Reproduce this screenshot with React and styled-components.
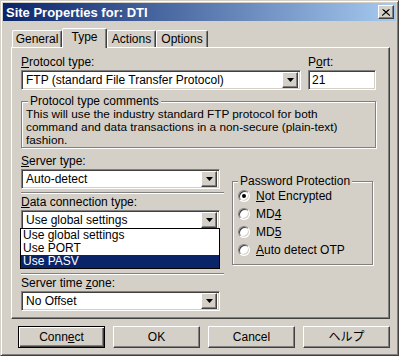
import React from "react";
import styled, { createGlobalStyle, css } from "styled-components";

const face = "#d4d0c8";
const shadow = "#808080";
const dark = "#404040";

const GlobalStyle = createGlobalStyle`
  html, body {
    margin: 0;
    padding: 0;
    background: ${face};
  }
  body {
    font-family: "Liberation Sans", Arial, "Noto Sans CJK JP", sans-serif;
    font-size: 12px;
    color: #000;
  }
`;

const raised = css`
  border: 1px solid;
  border-color: #fff ${dark} ${dark} #fff;
  box-shadow: inset -1px -1px 0 ${shadow}, inset 1px 1px 0 ${face};
`;

const sunken = css`
  border: 1px solid;
  border-color: ${shadow} #fff #fff ${shadow};
  box-shadow: inset 1px 1px 0 ${dark}, inset -1px -1px 0 ${face};
`;

const Window = styled.div`
  width: 399px;
  height: 356px;
  box-sizing: border-box;
  background: ${face};
  border: 1px solid;
  border-color: ${face} ${dark} ${dark} ${face};
  box-shadow: inset 1px 1px 0 #fff, inset -1px -1px 0 ${shadow};
  padding: 2px;
  display: flex;
  flex-direction: column;
`;

const TitleBar = styled.div`
  height: 18px;
  background: linear-gradient(to right, #0a246a, #a6caf0);
  display: flex;
  align-items: center;
  justify-content: space-between;
  padding: 0 2px 0 3px;
`;

const Title = styled.span`
  color: #fff;
  font-weight: bold;
  font-size: 13px;
`;

const CloseButton = styled.div`
  width: 16px;
  height: 14px;
  box-sizing: border-box;
  background: ${face};
  ${raised};
  display: flex;
  align-items: center;
  justify-content: center;
`;

const TabRow = styled.div`
  display: flex;
  align-items: flex-end;
  height: 19px;
  margin: 7px 0 0 9px;
`;

const Tab = styled.div`
  width: ${(p) => p.$w}px;
  box-sizing: border-box;
  height: ${(p) => (p.$active ? 20 : 17)}px;
  margin-bottom: ${(p) => (p.$active ? -1 : 0)}px;
  background: ${face};
  border-top: 1px solid #fff;
  border-left: 1px solid #fff;
  border-right: 1px solid ${dark};
  box-shadow: inset -1px 0 0 ${shadow};
  border-radius: 2px 2px 0 0;
  position: relative;
  z-index: ${(p) => (p.$active ? 2 : 0)};
  text-align: center;
  line-height: 15px;
  padding-top: 1px;
`;

const Panel = styled.div`
  margin-left: 8px;
  width: 379px;
  height: 272px;
  box-sizing: border-box;
  ${raised};
  position: relative;
  z-index: 1;
  padding: 7px 0 0 9px;
  display: flex;
  flex-direction: column;
`;

const Label = styled.div`
  height: 14px;
  line-height: 14px;
  margin-bottom: 1px;
  white-space: nowrap;
`;

const TopRow = styled.div`
  display: grid;
  grid-template-columns: 280px 68px;
  column-gap: 7px;
`;

const ComboBox = styled.div`
  width: ${(p) => p.$w}px;
  height: 20px;
  box-sizing: border-box;
  background: #fff;
  ${sunken};
  display: flex;
  align-items: center;
  padding: 2px;
  position: relative;
`;

const ComboText = styled.span`
  flex: 1;
  padding-left: 2px;
  line-height: 16px;
  white-space: nowrap;
  overflow: hidden;
`;

const ArrowButton = styled.div`
  width: 16px;
  height: 16px;
  box-sizing: border-box;
  background: ${face};
  ${raised};
  display: flex;
  align-items: center;
  justify-content: center;
`;

const TextInput = styled.div`
  height: 20px;
  box-sizing: border-box;
  background: #fff;
  ${sunken};
  padding: 0 3px;
  line-height: 18px;
`;

const GroupBox = styled.fieldset`
  margin: ${(p) => p.$mt || 0}px 0 0;
  box-sizing: border-box;
  width: ${(p) => p.$w}px;
  border: 1px solid ${shadow};
  box-shadow: 1px 1px 0 #fff, inset 1px 1px 0 #fff;
  padding: 0 3px ${(p) => p.$pb}px ${(p) => p.$pl}px;
`;

const Legend = styled.legend`
  padding: 0 2px;
  margin-left: ${(p) => p.$ml || 0}px;
  line-height: 14px;
  height: 14px;
  background: ${face};
`;

const Comment = styled.div`
  font-size: 11.8px;
  line-height: 13px;
  white-space: nowrap;
`;

const Lower = styled.div`
  display: flex;
  align-items: flex-start;
  margin-top: 6px;
`;

const LeftCol = styled.div`
  width: 199px;
  display: flex;
  flex-direction: column;
`;

const Separator = styled.div`
  width: 203px;
  height: 0;
  border-top: 1px solid ${shadow};
  border-bottom: 1px solid #fff;
  margin: ${(p) => p.$mt}px 0 1px;
`;

const DropList = styled.div`
  position: absolute;
  left: -2px;
  top: 17px;
  width: 200px;
  box-sizing: border-box;
  border: 1px solid #000;
  background: #fff;
  z-index: 3;
`;

const DropItem = styled.div`
  height: 13px;
  line-height: 13px;
  padding-left: 2px;
  white-space: nowrap;
  background: ${(p) => (p.$sel ? "#0a246a" : "#fff")};
  color: ${(p) => (p.$sel ? "#fff" : "#000")};
`;

const RightCol = styled.div`
  margin: 20px 0 0 12px;
`;

const RadioList = styled.div`
  margin-top: -1px;
`;

const RadioRow = styled.div`
  height: 18px;
  display: flex;
  align-items: center;
  gap: 6px;
`;

const RadioCircle = styled.span`
  width: 12px;
  height: 12px;
  box-sizing: border-box;
  border-radius: 50%;
  border: 1px solid;
  border-color: ${shadow} #fff #fff ${shadow};
  box-shadow: inset 1px 1px 0 ${dark}, inset -1px -1px 0 ${face};
  background: #fff;
  display: flex;
  align-items: center;
  justify-content: center;
  &::after {
    content: "";
    width: 4px;
    height: 4px;
    border-radius: 50%;
    background: ${(p) => (p.$checked ? "#000" : "transparent")};
  }
`;

const ButtonRow = styled.div`
  display: flex;
  gap: 8px;
  margin: 7px 0 0 15px;
`;

const Button = styled.div`
  width: 87px;
  height: 22px;
  box-sizing: border-box;
  background: ${face};
  text-align: center;
  line-height: 20px;
  ${(p) =>
    p.$default
      ? css`
          border: 1px solid #000;
          box-shadow: inset 1px 1px 0 #fff, inset -1px -1px 0 ${dark}, inset -2px -2px 0 ${shadow};
        `
      : raised};
`;

function Arrow() {
  return (
    <svg width="7" height="4" viewBox="0 0 7 4">
      <path d="M0 0h7L3.5 4z" fill="#000" />
    </svg>
  );
}

function Combo({ w, text, children }) {
  return (
    <ComboBox $w={w}>
      <ComboText>{text}</ComboText>
      <ArrowButton>
        <Arrow />
      </ArrowButton>
      {children}
    </ComboBox>
  );
}

function Radio({ checked, children }) {
  return (
    <RadioRow>
      <RadioCircle $checked={checked} />
      <span>{children}</span>
    </RadioRow>
  );
}

export default function App() {
  return (
    <>
      <GlobalStyle />
      <Window>
        <TitleBar>
          <Title>Site Properties for: DTI</Title>
          <CloseButton>
            <svg width="8" height="7" viewBox="0 0 8 7">
              <path d="M0.5 0.5L7.5 6.5M1.5 0.5L8 6.5M7.5 0.5L0.5 6.5M6.5 0.5L0 6.5" stroke="#000" strokeWidth="1" />
            </svg>
          </CloseButton>
        </TitleBar>

        <TabRow>
          <Tab $w={50}>General</Tab>
          <Tab $w={45} $active>
            Type
          </Tab>
          <Tab $w={49}>Actions</Tab>
          <Tab $w={52}>Options</Tab>
        </TabRow>

        <Panel>
          <TopRow>
            <div>
              <Label>
                <u>P</u>rotocol type:
              </Label>
              <Combo w={280} text="FTP (standard File Transfer Protocol)" />
            </div>
            <div>
              <Label>
                P<u>o</u>rt:
              </Label>
              <TextInput>21</TextInput>
            </div>
          </TopRow>

          <GroupBox $w={355} $pl={4} $pb={0} $mt={4}>
            <Legend $ml={2}>Protocol type comments</Legend>
            <Comment>
              This will use the industry standard FTP protocol for both
              <br />
              command and data transactions in a non-secure (plain-text)
              <br />
              fashion.
            </Comment>
          </GroupBox>

          <Lower>
            <LeftCol>
              <Label>
                <u>S</u>erver type:
              </Label>
              <Combo w={199} text="Auto-detect" />
              <Separator $mt={3} />
              <Label>
                <u>D</u>ata connection type:
              </Label>
              <Combo w={199} text="Use global settings">
                <DropList>
                  <DropItem>Use global settings</DropItem>
                  <DropItem>Use PORT</DropItem>
                  <DropItem $sel>Use PASV</DropItem>
                </DropList>
              </Combo>
              <Separator $mt={43} />
              <Label>
                Server time <u>z</u>one:
              </Label>
              <Combo w={199} text="No Offset" />
            </LeftCol>

            <RightCol>
              <GroupBox $w={141} $pl={5} $pb={5}>
                <Legend $ml={0}>Password Protection</Legend>
                <RadioList>
                  <Radio checked>
                    <u>N</u>ot Encrypted
                  </Radio>
                  <Radio>
                    MD<u>4</u>
                  </Radio>
                  <Radio>
                    MD<u>5</u>
                  </Radio>
                  <Radio>
                    <u>A</u>uto detect OTP
                  </Radio>
                </RadioList>
              </GroupBox>
            </RightCol>
          </Lower>
        </Panel>

        <ButtonRow>
          <Button $default>
            Conn<u>e</u>ct
          </Button>
          <Button>OK</Button>
          <Button>Cancel</Button>
          <Button>ヘルプ</Button>
        </ButtonRow>
      </Window>
    </>
  );
}
